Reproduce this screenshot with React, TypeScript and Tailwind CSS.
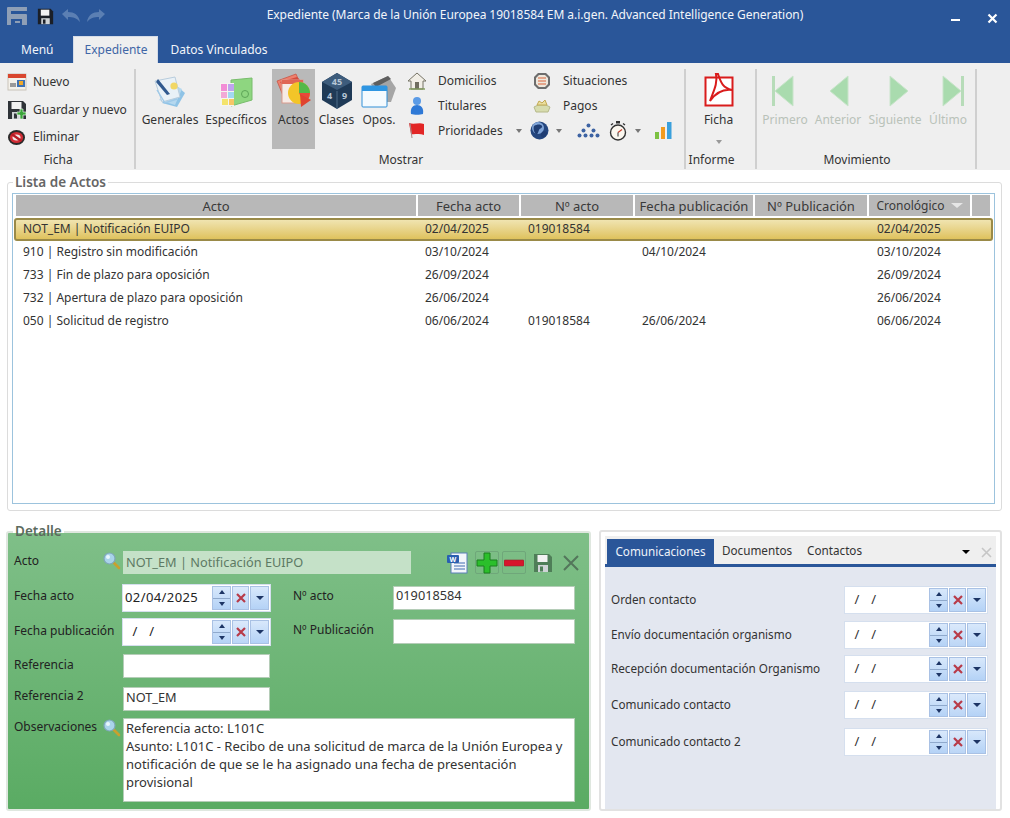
import type { ReactNode } from "react";

type ActoRow = {
  acto: string;
  fecha: string;
  numero: string;
  publicacion: string;
  cronologico: string;
};

const ROWS: ActoRow[] = [
  { acto: "NOT_EM | Notificación EUIPO", fecha: "02/04/2025", numero: "019018584", publicacion: "", cronologico: "02/04/2025" },
  { acto: "910 | Registro sin modificación", fecha: "03/10/2024", numero: "", publicacion: "04/10/2024", cronologico: "03/10/2024" },
  { acto: "733 | Fin de plazo para oposición", fecha: "26/09/2024", numero: "", publicacion: "", cronologico: "26/09/2024" },
  { acto: "732 | Apertura de plazo para oposición", fecha: "26/06/2024", numero: "", publicacion: "", cronologico: "26/06/2024" },
  { acto: "050 | Solicitud de registro", fecha: "06/06/2024", numero: "019018584", publicacion: "26/06/2024", cronologico: "06/06/2024" },
];

const COMUNICACIONES = [
  { label: "Orden contacto", gap: "mt-[19px]" },
  { label: "Envío documentación organismo", gap: "mt-[9px]" },
  { label: "Recepción documentación Organismo", gap: "mt-[8px]" },
  { label: "Comunicado contacto", gap: "mt-[10px]" },
  { label: "Comunicado contacto 2", gap: "mt-[11px]" },
];

const NAV = [
  { label: "Primero", dir: "left" as const, bar: true, w: "w-[52px]", shift: "-translate-x-[1px]" },
  { label: "Anterior", dir: "left" as const, bar: false, w: "w-[54px]", shift: "translate-x-[1px]" },
  { label: "Siguiente", dir: "right" as const, bar: false, w: "w-[60px]", shift: "translate-x-[4px]" },
  { label: "Último", dir: "right" as const, bar: true, w: "w-[46px]", shift: "translate-x-[4px]" },
];

function Caret({ className = "border-t-[#777]" }: { className?: string }) {
  return <span className={`inline-block h-0 w-0 border-x-[3px] border-t-[4px] border-x-transparent ${className}`} />;
}

function Lupa() {
  return (
    <svg width="19" height="19" viewBox="0 0 19 19">
      <path d="M11 11l6 6" stroke="#c9a02e" strokeWidth="2.6" strokeLinecap="round" />
      <circle cx="7.5" cy="7.5" r="5.5" fill="#a9d4ea" stroke="#7fa6b8" strokeWidth="1.2" />
      <circle cx="6" cy="6" r="2" fill="#e8f6fc" />
    </svg>
  );
}

function NuevoIcon() {
  return (
    <svg width="20" height="18" viewBox="0 0 20 18">
      <rect x="1" y="1" width="18" height="16" fill="#f4f1ea" stroke="#c9c4ba" />
      <rect x="1" y="1" width="18" height="4" fill="#d9462e" />
      <rect x="10" y="7" width="8" height="7" fill="#3f73b5" />
      <rect x="12" y="8" width="4" height="4" fill="#f0a92a" />
      <rect x="3" y="10" width="6" height="4" fill="#9a9a9a" />
    </svg>
  );
}

function DisketteIcon({ size = 20, color = "#2f3338", plus = false }: { size?: number; color?: string; plus?: boolean }) {
  return (
    <svg width={size} height={size} viewBox="0 0 20 20">
      <path d="M1 1h15l3 3v15H1z" fill={color} />
      <rect x="4.5" y="2" width="10" height="7" fill="#f2f2f2" />
      <rect x="5" y="12" width="10" height="7" fill="#cfd3d6" />
      <rect x="7" y="13.5" width="3" height="5" fill={color} />
      {plus && <path d="M13 9h3v3h3v3h-3v4h-3v-4h-3v-3h3z" fill="#3aa53a" stroke="#e9f6e9" strokeWidth=".7" />}
    </svg>
  );
}

function EliminarIcon() {
  return (
    <svg width="19" height="17" viewBox="0 0 19 17">
      <ellipse cx="9.5" cy="8.5" rx="8.5" ry="7.5" fill="#2a2a2a" />
      <ellipse cx="9.5" cy="8.5" rx="6.6" ry="5.6" fill="#d22d35" />
      <ellipse cx="9.5" cy="8.5" rx="4" ry="3" fill="#f2e9e9" />
      <path d="M4.5 5l10 7" stroke="#b71c25" strokeWidth="2.4" />
    </svg>
  );
}

function GeneralesIcon() {
  return (
    <svg width="34" height="34" viewBox="0 0 34 34">
      <path d="M9 28l15 4 8-14-7-6z" fill="#8fc3e6" />
      <path d="M6 25l16 5 7-16-8-4z" fill="#b5d8ef" />
      <path d="M2 6l20-4 5 20-18 5z" fill="#e9f1f7" stroke="#b9cddd" />
      <circle cx="21" cy="11" r="3.6" fill="#f1d766" />
      <path d="M5 4l12 15-3 1L3 7z" fill="#30598f" />
      <path d="M4 15l8 13 12-4" fill="none" stroke="#9ec9e8" strokeWidth="1.4" />
    </svg>
  );
}

function EspecificosIcon() {
  return (
    <svg width="36" height="32" viewBox="0 0 36 32">
      <path d="M13 3l21-2v22l-21 6z" fill="#8ed680" stroke="#78bd6c" />
      <circle cx="27" cy="17" r="3.5" fill="none" stroke="#5da557" />
      <rect x="2" y="6" width="14" height="23" fill="#f4f4f0" />
      <rect x="3" y="7" width="6" height="7" fill="#f28dd6" />
      <rect x="10" y="7" width="6" height="7" fill="#bfa4ee" />
      <rect x="3" y="15" width="6" height="6" fill="#f2a9d6" />
      <rect x="10" y="15" width="6" height="6" fill="#a2d8f3" />
      <rect x="4" y="22" width="6" height="6" fill="#f4e46c" />
      <rect x="11" y="22" width="5" height="6" fill="#f8c667" />
    </svg>
  );
}

function ActosIcon() {
  return (
    <svg width="36" height="36" viewBox="0 0 36 36">
      <path d="M1 8L20 1l7 16-19 8z" fill="#ef7f6c" stroke="#c75747" strokeWidth=".8" />
      <path d="M4 9l17-5 3 3-17 6z" fill="#d44a3c" />
      <rect x="6" y="7" width="21" height="23" fill="#f6ebe6" stroke="#d99b8e" />
      <rect x="6" y="7" width="21" height="4" fill="#e06655" />
      <circle cx="23" cy="20" r="11" fill="#f3c528" />
      <path d="M23 20V9a11 11 0 0 1 11 11z" fill="#54b848" />
      <path d="M23 20h11a11 11 0 0 1-6 9.7z" fill="#e8483a" />
      <path d="M24 21l11 6-10 7z" fill="#e0432f" />
    </svg>
  );
}

function ClasesIcon() {
  return (
    <svg width="32" height="36" viewBox="0 0 32 36">
      <path d="M16 0l15 9v18l-15 9-15-9V9z" fill="#1f3a57" />
      <path d="M16 17L1 9l15-9 15 9z" fill="#3d5c7c" />
      <path d="M16 18v18" stroke="#4f6c8a" />
      <text x="16" y="12" textAnchor="middle" fontSize="9" fontWeight="700" fill="#b7c6d6">45</text>
      <text x="8.5" y="26" textAnchor="middle" fontSize="9" fontWeight="700" fill="#b7c6d6">4</text>
      <text x="23.5" y="26" textAnchor="middle" fontSize="9" fontWeight="700" fill="#b7c6d6">9</text>
    </svg>
  );
}

function OposIcon() {
  return (
    <svg width="36" height="34" viewBox="0 0 36 34">
      <path d="M10 9l17-8 8 12-5 14H18z" fill="#a5a5a5" />
      <path d="M12 8l15-7 3 3-15 8z" fill="#5f5f5f" />
      <rect x="1" y="11" width="25" height="21" rx="1" fill="#f4fafe" stroke="#2f8fd8" />
      <rect x="1" y="11" width="25" height="5" fill="#2f96e2" />
    </svg>
  );
}

function DomiciliosIcon() {
  return (
    <svg width="20" height="18" viewBox="0 0 20 18">
      <path d="M10 1L1 9h3v8h12V9h3z" fill="#f1eee6" stroke="#777466" />
      <rect x="8" y="10" width="4" height="7" fill="#6f6c5e" />
      <path d="M2 17h16" stroke="#7f9a5a" strokeWidth="1.4" />
    </svg>
  );
}

function TitularesIcon() {
  return (
    <svg width="14" height="19" viewBox="0 0 14 19">
      <circle cx="7" cy="5" r="4" fill="#5b9be6" />
      <path d="M1 18c-1-6 2-9 6-9s7 3 6 9c-3 1-9 1-12 0z" fill="#2f79d6" />
    </svg>
  );
}

function PrioridadesIcon() {
  return (
    <svg width="17" height="17" viewBox="0 0 17 17">
      <path d="M1 1c5 2 10-1 15 1v11C11 11 6 13 3 12z" fill="#e22626" />
      <path d="M2 1l2 15" stroke="#a88" />
    </svg>
  );
}

function SituacionesIcon() {
  return (
    <svg width="18" height="18" viewBox="0 0 18 18">
      <path d="M5 1h8l4 4v8l-4 4H5l-4-4V5z" fill="#6d6d6d" />
      <path d="M6 3h6l3 3v6l-3 3H6l-3-3V6z" fill="#eee7dc" />
      <path d="M5 6h8M5 9h8M5 12h8" stroke="#d9643a" strokeWidth="1.2" />
    </svg>
  );
}

function PagosIcon() {
  return (
    <svg width="18" height="14" viewBox="0 0 18 14">
      <path d="M1 8l4-2 8 0 4 2-2 5H3z" fill="#d7dcae" stroke="#b6b98a" />
      <path d="M4 6l2-4 3 2 3-3 2 5z" fill="#eadf9e" stroke="#c2a952" />
    </svg>
  );
}

function GlobeIcon() {
  return (
    <svg width="19" height="19" viewBox="0 0 19 19">
      <circle cx="9.5" cy="9.5" r="9" fill="#24467f" />
      <circle cx="8" cy="7" r="6" fill="#7fa4d8" />
      <path d="M4 5c3-2 7-2 8 0s-2 2-3 4-1 5-3 4-3-6-2-8zM12 11c2-1 5-1 5 1s-3 5-5 4-1-4 0-5z" fill="#1f3d73" />
    </svg>
  );
}

function OrgIcon() {
  const dots = [[12, 2], [7, 7], [17, 7], [3, 12], [9, 12], [15, 12], [21, 12]];
  return (
    <svg width="25" height="15" viewBox="0 0 25 15">
      {dots.map(([x, y]) => (
        <circle key={`${x}-${y}`} cx={x + 0.5} cy={y + 0.5} r="2" fill="#3d63a3" />
      ))}
    </svg>
  );
}

function CronoIcon() {
  return (
    <svg width="18" height="20" viewBox="0 0 18 20">
      <rect x="7" y="0" width="4" height="2.5" fill="#333" />
      <path d="M2 4l2-1.5M16 4l-2-1.5" stroke="#333" strokeWidth="1.4" />
      <circle cx="9" cy="11.5" r="7.5" fill="#fbf7ef" stroke="#333" strokeWidth="1.4" />
      <path d="M9 11.5l4-3" stroke="#c93c2a" strokeWidth="1.2" />
      <path d="M9 11.5v4" stroke="#333" />
    </svg>
  );
}

function ChartIcon() {
  return (
    <svg width="17" height="19" viewBox="0 0 17 19">
      <rect x="0" y="11" width="4" height="7" fill="#7cc142" />
      <rect x="6" y="6" width="4" height="12" fill="#f09a1f" />
      <rect x="12" y="1" width="4.5" height="17" fill="#3aa0dc" />
    </svg>
  );
}

function PdfIcon() {
  return (
    <svg width="30" height="34" viewBox="0 0 30 34">
      <rect x="1.5" y="4.5" width="27" height="28" fill="#fff" stroke="#d91c1c" strokeWidth="2" />
      <path d="M14 1c3 9 5 14 14 16-8-1-15 1-22 11 3-9 8-17 6-27z" fill="none" stroke="#d91c1c" strokeWidth="2" />
    </svg>
  );
}

function NavIcon({ dir, bar }: { dir: "left" | "right"; bar: boolean }) {
  return (
    <svg width="26" height="32" viewBox="0 0 26 32">
      {bar && <rect x={dir === "left" ? 1 : 22} y="1" width="3" height="30" fill="#b7dcb9" />}
      <path
        d={dir === "left" ? "M22 1L4 16l18 15z" : "M4 1l18 15L4 31z"}
        fill="#a9dbae"
        stroke="#c8e4ca"
      />
    </svg>
  );
}

function LargeButton({ label, icon, active = false }: { label: string; icon: ReactNode; active?: boolean }) {
  return (
    <div className={`flex h-[80px] flex-col items-center ${active ? "bg-[#b9b9b9]" : ""}`}>
      <div className="flex h-[40px] items-end justify-center">{icon}</div>
      <span className="mt-[3px] leading-[16px]">{label}</span>
    </div>
  );
}

// className lleva la altura de la fila y el ancho, si hace falta
function SmallButton({ label, icon, className, textGap = "ml-[11px]" }: { label: string; icon: ReactNode; className: string; textGap?: string }) {
  return (
    <div className={`flex items-center ${className}`}>
      <span className="flex w-[21px] justify-center">{icon}</span>
      <span className={textGap}>{label}</span>
    </div>
  );
}

function RibbonGroup({ title, className, children }: { title: string; className: string; children: ReactNode }) {
  return (
    <div className={`flex h-[100px] shrink-0 flex-col border-r-2 border-[#cfcfcf] ${className}`}>
      <div className="h-[80px] grow-0">{children}</div>
      <div className="mt-[3px] whitespace-nowrap pr-[18px] text-center leading-[16px]">{title}</div>
    </div>
  );
}

function Ribbon() {
  return (
    <div className="flex h-[107px] bg-[#efefef] pt-[6px] text-[#333]">
      <RibbonGroup title="Ficha" className="w-[136px]">
        <div className="flex h-full flex-col pl-[6px]">
          <SmallButton className="h-[26px]" textGap="ml-[6px]" label="Nuevo" icon={<NuevoIcon />} />
          <SmallButton className="h-[30px]" textGap="ml-[6px]" label="Guardar y nuevo" icon={<DisketteIcon plus />} />
          <SmallButton className="h-[24px]" textGap="ml-[6px]" label="Eliminar" icon={<EliminarIcon />} />
        </div>
      </RibbonGroup>
      <RibbonGroup title="Mostrar" className="w-[550px]">
        <div className="flex pl-[2px]">
          <div className="w-[64px]"><LargeButton label="Generales" icon={<GeneralesIcon />} /></div>
          <div className="ml-[1px] w-[66px]"><LargeButton label="Específicos" icon={<EspecificosIcon />} /></div>
          <div className="ml-[3px] w-[43px]"><LargeButton label="Actos" icon={<ActosIcon />} active /></div>
          <div className="ml-[1px] w-[41px]"><LargeButton label="Clases" icon={<ClasesIcon />} /></div>
          <div className="w-[44px]"><LargeButton label="Opos." icon={<OposIcon />} /></div>
          <div className="ml-[5px] -mt-[1px] flex flex-col">
            <div className="flex">
              <SmallButton className="h-[25px] w-[125px]" label="Domicilios" icon={<DomiciliosIcon />} />
              <SmallButton className="h-[25px] w-[100px]" label="Situaciones" icon={<SituacionesIcon />} />
            </div>
            <div className="flex">
              <SmallButton className="h-[25px] w-[125px]" label="Titulares" icon={<TitularesIcon />} />
              <SmallButton className="h-[25px] w-[100px]" label="Pagos" icon={<PagosIcon />} />
            </div>
            <div className="flex items-center">
              <SmallButton className="h-[25px] w-[110px]" label="Prioridades" icon={<PrioridadesIcon />} />
              <Caret />
              <span className="ml-[8px] flex"><GlobeIcon /></span>
              <span className="ml-[7px] flex"><Caret /></span>
              <span className="ml-[14px] flex"><OrgIcon /></span>
              <span className="ml-[8px] flex"><CronoIcon /></span>
              <span className="ml-[8px] flex"><Caret /></span>
              <span className="ml-[14px] flex"><ChartIcon /></span>
            </div>
          </div>
        </div>
      </RibbonGroup>
      <RibbonGroup title="Informe" className="w-[71px]">
        <div className="flex flex-col items-center pr-[4px]">
          <div className="mt-[3px] flex h-[35px] items-end"><PdfIcon /></div>
          <span className="mt-[5px] leading-[16px]">Ficha</span>
          <span className="mt-[12px] flex"><Caret className="border-t-[#999]" /></span>
        </div>
      </RibbonGroup>
      <RibbonGroup title="Movimiento" className="w-[220px]">
        <div className="flex pl-[2px] text-[#b9c2b9]">
          {NAV.map((b) => (
            <div key={b.label} className={`flex flex-col items-center ${b.w}`}>
              <div className={`mt-[6px] flex h-[32px] items-center ${b.shift}`}><NavIcon dir={b.dir} bar={b.bar} /></div>
              <span className="mt-[5px] leading-[16px]">{b.label}</span>
            </div>
          ))}
        </div>
      </RibbonGroup>
    </div>
  );
}

function TitleBar() {
  return (
    <div className="h-[63px] bg-[#2a5699] text-[#f2f5fa]">
      <div className="flex h-[36px] items-center pb-[4px] pl-[7px] pr-[12px]">
        <svg width="20" height="18" viewBox="0 0 20 18">
          <path d="M1 0h19v4H4v3h15a1 1 0 0 1 1 1v10h-5v-6H4v6H0V1a1 1 0 0 1 1-1z" fill="#8f9fb6" />
          <rect x="8" y="14" width="5" height="2" fill="#8f9fb6" />
        </svg>
        <span className="ml-[10px] flex"><DisketteIcon size={17} color="#1b1f27" /></span>
        <svg className="ml-[7px]" width="20" height="14" viewBox="0 0 20 14">
          <path d="M1 5l6-5v3c6 0 11 3 12 10-3-4-7-5-12-5v3z" fill="#5b7fb3" />
        </svg>
        <svg className="ml-[5px]" width="20" height="14" viewBox="0 0 20 14">
          <path d="M19 5l-6-5v3C7 3 2 6 1 13c3-4 7-5 12-5v3z" fill="#5b7fb3" />
        </svg>
        <div className="mb-[2px] ml-[160px] w-[539px] whitespace-nowrap text-center tracking-[-0.06px]">Expediente (Marca de la Unión Europea 19018584 EM a.i.gen. Advanced Intelligence Generation)</div>
        <div className="ml-[147px] mt-[8px] h-[2px] w-[9px] bg-white" />
        <svg className="ml-[27px] mt-[4px]" width="11" height="11" viewBox="0 0 11 11">
          <path d="M1.5 1.5l8 8M9.5 1.5l-8 8" stroke="#fff" strokeWidth="2.2" />
        </svg>
      </div>
      <div className="flex h-[27px] items-center pl-[21px]">
        <span>Menú</span>
        <span className="ml-[20px] flex h-[27px] w-[85px] items-center justify-center border-x border-t border-[#d5dce8] bg-[#efefef] text-[#3f66a6]">Expediente</span>
        <span className="ml-[12px]">Datos Vinculados</span>
      </div>
    </div>
  );
}

function ListaActos() {
  return (
    <fieldset className="ml-[7px] mt-[4px] h-[337px] w-[995px] min-w-0 rounded-[3px] border border-[#dcdcdc] pb-[6px] pl-[4px] pr-[6px]">
      <legend className="ml-[1px] px-[2px] text-[13.5px] font-semibold leading-[17px] text-[#666]">Lista de Actos</legend>
      <div className="mt-[2px] h-[311px] border border-[#9cc3dd] pl-[3px] pt-[1px]">
        <div className="flex h-[21px] gap-[2px] text-center text-[13px] leading-[22px] text-[#3a3a3a]">
          <div className="w-[400px] bg-[#b8b8b8]">Acto</div>
          <div className="w-[101px] bg-[#b8b8b8]">Fecha acto</div>
          <div className="w-[112px] bg-[#b8b8b8]">Nº acto</div>
          <div className="w-[118px] whitespace-nowrap bg-[#b8b8b8]">Fecha publicación</div>
          <div className="w-[112px] bg-[#b8b8b8]">Nº Publicación</div>
          <div className="flex w-[101px] items-center justify-center gap-[6px] bg-[#b8b8b8] text-[12px]">
            Cronológico
            <Caret className="border-t-[#e6e6e6] [border-left-width:6px] [border-right-width:6px] [border-top-width:5px]" />
          </div>
          <div className="w-[18px] bg-[#b8b8b8]" />
        </div>
        <div className="mt-[2px]">
          {ROWS.map((r, i) => (
            <div
              key={r.acto}
              className={`flex h-[22.8px] items-center ${
                i === 0
                  ? "-ml-[2px] w-[979px] rounded-[3px] border-2 border-[#9a8a48] bg-linear-to-b from-[#f0e4b0] to-[#dfc25c] pl-[7px]"
                  : "pl-[7px]"
              }`}
            >
              <div className="w-[402px] shrink-0">{r.acto}</div>
              <div className="w-[103px] shrink-0">{r.fecha}</div>
              <div className="w-[114px] shrink-0">{r.numero}</div>
              <div className="w-[235px] shrink-0">{r.publicacion}</div>
              <div className="shrink-0">{r.cronologico}</div>
            </div>
          ))}
        </div>
      </div>
    </fieldset>
  );
}

function DateField({ value, className }: { value?: string; className: string }) {
  return (
    <div className={`flex h-[26px] items-stretch bg-white p-[1px] shadow-[0_0_0_1px_#d5dfee] ${className}`}>
      <div className="flex flex-1 items-center whitespace-pre pl-[1px] text-[13px] tracking-[0.4px]">
        {value ?? "  /   /"}
      </div>
      <div className="flex w-[19px] flex-col border border-[#a9c1e4] bg-linear-to-b from-[#d8e8fb] to-[#b4d2f6]">
        <span className="flex flex-1 items-center justify-center border-b border-[#8fa9cc]"><Caret className="rotate-180 border-t-[#1d3565]" /></span>
        <span className="flex flex-1 items-center justify-center"><Caret className="border-t-[#1d3565]" /></span>
      </div>
      <div className="ml-[1px] flex w-[17px] items-center justify-center border border-[#a9c1e4] bg-linear-to-b from-[#dbe9fb] to-[#bcd6f6]">
        <svg width="10" height="10" viewBox="0 0 10 10">
          <path d="M1 1l8 8M9 1L1 9" stroke="#b83a48" strokeWidth="2.2" />
        </svg>
      </div>
      <div className="ml-[1px] flex w-[19px] items-center justify-center border border-[#a9c1e4] bg-linear-to-b from-[#d8e8fb] to-[#b4d2f6]">
        <span className="h-0 w-0 border-x-[4px] border-t-[4px] border-x-transparent border-t-[#1d3565]" />
      </div>
    </div>
  );
}

function TextBox({ value = "", className }: { value?: string; className: string }) {
  return <div className={`flex items-center border border-[#b5cdb8] bg-white pb-[3px] pl-[2px] text-[12.75px] text-[#333] ${className}`}>{value}</div>;
}

function Detalle() {
  return (
    <fieldset className="h-[288px] w-[585px] min-w-0 shrink-0 rounded-[3px] border-2 border-[#dfe7df] bg-linear-to-b from-[#7fbf88] to-[#5aab63] pl-[6px] pr-[6px] text-[#222]">
      <legend className="-ml-[1px] px-[2px] text-[13.5px] font-semibold leading-[17px] text-[#5c6b5e]">Detalle</legend>
      <div className="mt-[11px] flex h-[23px] items-center">
        <span className="w-[88px] shrink-0 -translate-y-[2px]">Acto</span>
        <span className="flex w-[21px] shrink-0 -translate-y-[2px]"><Lupa /></span>
        <div className="flex h-[23px] w-[288px] shrink-0 items-center bg-[#c5e1c8] pl-[3px] text-[12.75px] text-[#5d7a64]">NOT_EM | Notificación EUIPO</div>
        <div className="ml-[35px] flex shrink-0 items-center">
          <svg width="22" height="22" viewBox="0 0 22 22">
            <rect x="5" y="1" width="16" height="20" fill="#f3f6fb" stroke="#5b7fb8" />
            <path d="M8 11h11M8 14h11M8 17h11" stroke="#3f6bb0" />
            <rect x="1" y="3" width="12" height="8" rx="1" fill="#2a5fb0" />
            <text x="7" y="10" textAnchor="middle" fontSize="7" fontWeight="700" fill="#fff">W</text>
          </svg>
          <span className="ml-[7px] flex h-[23px] w-[24px] items-center justify-center rounded-[2px] border border-[#6fa77a]">
            <svg width="22" height="22" viewBox="0 0 22 22">
              <path d="M8 1h6v7h7v6h-7v7H8v-7H1V8h7z" fill="#2bbf2b" stroke="#1b7f1f" />
            </svg>
          </span>
          <span className="ml-[3px] flex h-[23px] w-[24px] items-center justify-center rounded-[2px] border border-[#6fa77a]">
            <svg width="20" height="8" viewBox="0 0 20 8"><rect x="0" y="1" width="20" height="6" rx="1" fill="#d7162c" stroke="#8f2a30" strokeWidth=".6" /></svg>
          </span>
          <span className="ml-[7px] flex w-[20px] justify-center"><DisketteIcon size={20} color="#4f7e58" /></span>
          <span className="ml-[6px] flex h-[23px] w-[24px] items-center justify-center">
            <svg width="18" height="18" viewBox="0 0 18 18"><path d="M2 2l14 14M16 2L2 16" stroke="#54765b" strokeWidth="2" /></svg>
          </span>
        </div>
      </div>
      <div className="mt-[11px] flex">
        <div className="flex w-[256px] flex-col">
          <div className="flex h-[26px] items-center">
            <span className="w-[109px] -translate-y-[2px]">Fecha acto</span>
            <DateField value="02/04/2025" className="w-[147px]" />
          </div>
          <div className="mt-[8px] flex h-[26px] items-center">
            <span className="w-[109px] -translate-y-[1px] whitespace-nowrap">Fecha publicación</span>
            <DateField className="w-[147px]" />
          </div>
          <div className="mt-[9px] flex h-[24px] items-center">
            <span className="w-[109px] -translate-y-[1px]">Referencia</span>
            <TextBox className="h-[24px] w-[147px]" />
          </div>
          <div className="mt-[9px] flex h-[24px] items-center">
            <span className="w-[109px] -translate-y-[3px]">Referencia 2</span>
            <TextBox className="h-[24px] w-[147px]" value="NOT_EM" />
          </div>
        </div>
        <div className="ml-[23px] flex flex-col">
          <div className="flex h-[25px] items-center">
            <span className="w-[100px] -translate-y-[2px]">Nº acto</span>
            <TextBox className="h-[24px] w-[182px]" value="019018584" />
          </div>
          <div className="mt-[9px] flex h-[25px] items-center">
            <span className="w-[100px] -translate-y-[2px] whitespace-nowrap">Nº Publicación</span>
            <TextBox className="h-[25px] w-[182px]" />
          </div>
        </div>
      </div>
      <div className="mt-[7px] flex">
        <span className="mt-[1px] w-[88px] leading-[16px]">Observaciones</span>
        <span className="flex w-[21px]"><Lupa /></span>
        <div className="h-[84px] w-[452px] border border-[#b5cdb8] bg-white px-[2px] text-[13px] leading-[18px] text-[#333]">
          Referencia acto: L101C
          <br />
          Asunto: L101C - Recibo de una solicitud de marca de la Unión Europea y notificación de que se le ha asignado una fecha de presentación provisional
        </div>
      </div>
    </fieldset>
  );
}

function PanelComunicaciones() {
  return (
    <div className="ml-[8px] mt-[7px] h-[281px] w-[403px] rounded-[3px] border-2 border-[#e2e2e2] bg-white p-[4px] text-[11.7px] text-[#333]">
      <div className="flex h-[28px] items-end bg-[#efefef] pl-[2px]">
        <span className="flex h-[25px] w-[107px] items-center justify-center bg-[#2a5699] text-[#eef3fa]">Comunicaciones</span>
        <span className="ml-[8px] h-[22px]">Documentos</span>
        <span className="ml-[15px] h-[22px]">Contactos</span>
        <span className="mb-[10px] ml-auto flex h-0 w-0 border-x-[4px] border-t-[4px] border-x-transparent border-t-black" />
        <svg className="mb-[6px] ml-[11px] mr-[4px]" width="11" height="11" viewBox="0 0 11 11">
          <path d="M1 1l9 9M10 1l-9 9" stroke="#c6c6c6" strokeWidth="1.6" />
        </svg>
      </div>
      <div className="h-[3px] bg-[#2a5699]" />
      <div className="h-[242px] bg-[#e3e7f0] pl-[6px] pr-[9px] pt-[1px]">
        {COMUNICACIONES.map((c) => (
          <div key={c.label} className={`flex h-[26px] items-center justify-between ${c.gap}`}>
            <span>{c.label}</span>
            <DateField className="w-[142px]" />
          </div>
        ))}
      </div>
    </div>
  );
}

export default function App() {
  return (
    <div className="h-[818px] w-[1010px] overflow-hidden bg-white font-['Noto_Sans','Open_Sans',sans-serif] text-[12px] text-[#333]">
      <TitleBar />
      <Ribbon />
      <ListaActos />
      <div className="ml-[6px] mt-[12px] flex items-start">
        <Detalle />
        <PanelComunicaciones />
      </div>
    </div>
  );
}
